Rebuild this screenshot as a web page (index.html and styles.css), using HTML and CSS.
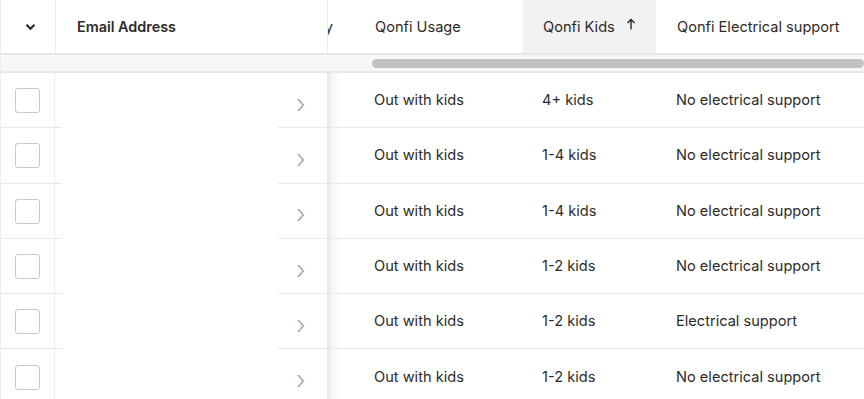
FILE: index.html
```html
<!DOCTYPE html>
<html lang="en">
<head>
    <meta charset="UTF-8">
    <title>Customers</title>
    <link rel="stylesheet" href="styles.css">
</head>
<body>
    <div class="grid">
        <div class="head">
            <div class="pin">
                <div class="sel">
                    <svg width="11" height="8" viewBox="0 0 11 8"><path d="M1.5 1.8 L5.5 5.8 L9.5 1.8" fill="none" stroke="#2b2724" stroke-width="2.2"/></svg>
                </div>
                <div class="email-head">Email Address</div>
            </div>
            <div class="cut"><span>Qonfi Country</span></div>
            <div class="col usage">Qonfi Usage</div>
            <div class="col kids sorted">Qonfi Kids
                <svg class="sort" width="10" height="12" viewBox="0 0 10 12"><path d="M5 11.5 V1.5 M1.5 5 L5 1.5 L8.5 5" fill="none" stroke="#2b2724" stroke-width="1.4"/></svg>
            </div>
            <div class="col elec">Qonfi Electrical support</div>
        </div>

        <div class="bar"><div class="thumb"></div></div>

        <div class="row">
            <div class="pin"><div class="sel"><span class="box"></span></div><div class="e-pad"></div><div class="e-val"></div><div class="e-go">&rsaquo;</div></div>
            <div class="cut"></div><div class="col usage">Out with kids</div><div class="col kids">4+ kids</div><div class="col elec">No electrical support</div>
        </div>
        <div class="row">
            <div class="pin"><div class="sel"><span class="box"></span></div><div class="e-pad"></div><div class="e-val"></div><div class="e-go">&rsaquo;</div></div>
            <div class="cut"></div><div class="col usage">Out with kids</div><div class="col kids">1-4 kids</div><div class="col elec">No electrical support</div>
        </div>
        <div class="row">
            <div class="pin"><div class="sel"><span class="box"></span></div><div class="e-pad"></div><div class="e-val"></div><div class="e-go">&rsaquo;</div></div>
            <div class="cut"></div><div class="col usage">Out with kids</div><div class="col kids">1-4 kids</div><div class="col elec">No electrical support</div>
        </div>
        <div class="row">
            <div class="pin"><div class="sel"><span class="box"></span></div><div class="e-pad"></div><div class="e-val"></div><div class="e-go">&rsaquo;</div></div>
            <div class="cut"></div><div class="col usage">Out with kids</div><div class="col kids">1-2 kids</div><div class="col elec">No electrical support</div>
        </div>
        <div class="row">
            <div class="pin"><div class="sel"><span class="box"></span></div><div class="e-pad"></div><div class="e-val"></div><div class="e-go">&rsaquo;</div></div>
            <div class="cut"></div><div class="col usage">Out with kids</div><div class="col kids">1-2 kids</div><div class="col elec">Electrical support</div>
        </div>
        <div class="row">
            <div class="pin"><div class="sel"><span class="box"></span></div><div class="e-pad"></div><div class="e-val"></div><div class="e-go">&rsaquo;</div></div>
            <div class="cut"></div><div class="col usage">Out with kids</div><div class="col kids">1-2 kids</div><div class="col elec">No electrical support</div>
        </div>
    </div>
</body>
</html>
```

FILE: styles.css
```css
body { margin: 0; font-family: 'Inter', 'Liberation Sans', sans-serif; font-size: 14.6px; color: #2e2a27; background: #fff; overflow: hidden; }
.grid { width: 864px; height: 399px; overflow: hidden; border-left: 1px solid #ececec; box-sizing: border-box; }

/* header */
.head { display: flex; height: 55px; border-bottom: 2px solid #e8e8e8; box-sizing: border-box; }
.head .pin { border-right: 1px solid #ededed; }
.pin { display: flex; width: 326px; flex: none; background: #fff; }
.sel { width: 54px; flex: none; border-right: 1px solid #ededed; display: flex; align-items: center; justify-content: center; }
.head .sel svg { margin-left: 4px; margin-top: 1px; }
.email-head { padding-left: 21px; display: flex; align-items: center; font-weight: 600; font-size: 14.4px; }
.cut { width: 27px; flex: none; display: flex; justify-content: flex-end; align-items: center; overflow: hidden; white-space: nowrap; box-sizing: border-box; padding-right: 22px; }
.col { display: flex; align-items: center; padding-left: 20px; box-sizing: border-box; white-space: nowrap; flex: none; }
.usage { width: 168px; }
.kids { width: 133px; }
.elec { flex: 1; padding-left: 21px; }
.sorted { background: #f2f2f2; }
.sort { margin-left: 11px; margin-top: -5px; }

/* scrollbar strip */
.bar { height: 12px; background: #f7f7f7; border-bottom: 2px solid #e8e8e8; padding-top: 4px; }
.thumb { margin-left: 371px; height: 9px; border-radius: 5px; background: #c2c2c2; }

/* rows */
.row { display: flex; height: 55.3px; }
.row .sel, .row .e-pad, .row .e-go, .row .col, .row .cut { border-bottom: 1px solid #e9e9e9; box-sizing: border-box; }
.box { width: 25px; height: 25px; border: 1px solid #c9c9c9; border-radius: 3px; margin-top: 1px; box-sizing: border-box; }
.e-pad { width: 7px; }
.e-val { width: 216px; }
.e-go { width: 49px; color: #a9a9a9; font-size: 26px; font-weight: 300; display: flex; align-items: center; padding-left: 18px; padding-top: 6px; box-sizing: border-box; }
.row .cut { background: linear-gradient(to right, #e6e6e6, #f6f6f6 5px, #fff 14px); }
```
